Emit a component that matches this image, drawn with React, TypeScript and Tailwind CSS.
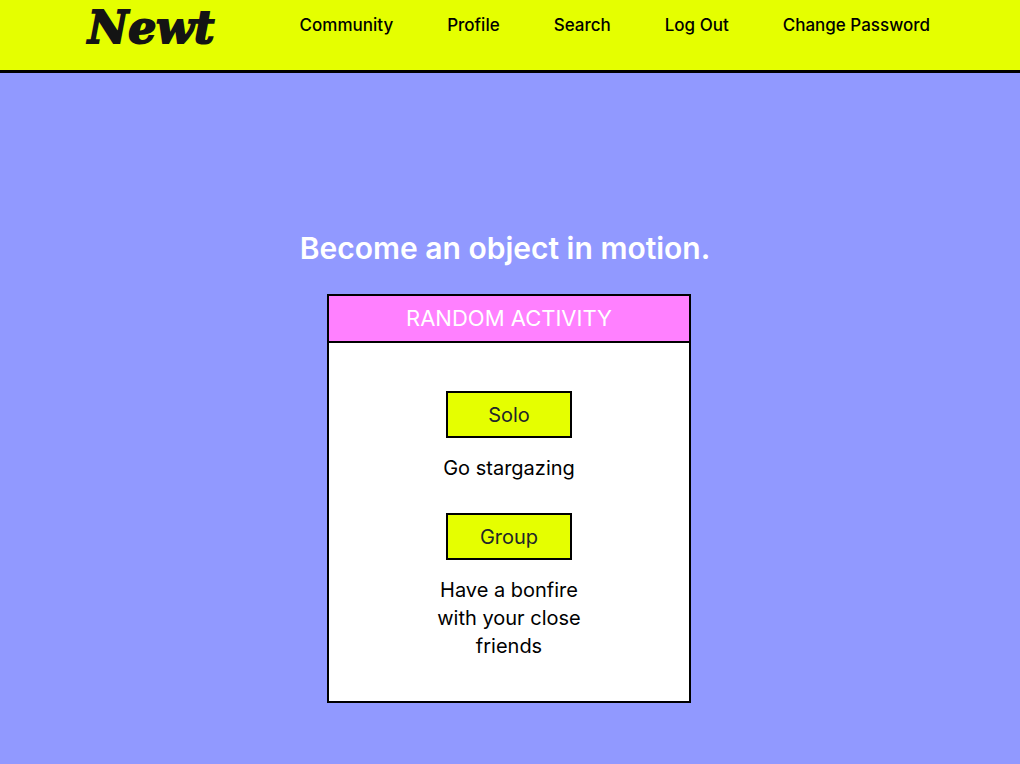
import type { ReactNode } from "react";

const links = ["Community", "Profile", "Search", "Log Out", "Change Password"];

function Header() {
  return (
    <header className="flex h-[73px] items-start justify-between border-b-3 border-black bg-[#e5ff00] pr-[90px] pl-[88px]">
      <a
        href="#home"
        className="pt-0.5 font-['DejaVu_Serif',serif] text-[44px] leading-[52px] font-bold text-[#141414] italic [-webkit-text-stroke:2px_#141414]"
      >
        Newt
      </a>
      <nav className="flex gap-[54px] pt-[13px] text-[17px] leading-6 font-medium whitespace-nowrap">
        {links.map((label) => (
          <a key={label} href={"#" + label.toLowerCase().replace(" ", "-")}>
            {label}
          </a>
        ))}
      </nav>
    </header>
  );
}

function Activity({ label, children }: { label: string; children: ReactNode }) {
  return (
    <div className="flex w-[156px] flex-col items-center gap-4">
      <button
        type="button"
        className="h-[47px] w-[126px] border-2 border-black bg-[#e5ff00] text-[20px] leading-7 text-[#212529]"
      >
        {label}
      </button>
      <p className="text-center text-[20px] leading-7">{children}</p>
    </div>
  );
}

export default function App() {
  return (
    <div className="min-h-screen bg-[#9199ff] font-['Inter',sans-serif] text-black">
      <Header />
      <main className="flex flex-col items-center pt-[155px] pr-[18px] pb-15 pl-4">
        <h1 className="pr-2 text-center text-[30px] leading-10 font-semibold text-white">
          Become an object in motion.
        </h1>
        <section className="mt-[26px] w-full max-w-[364px] border-2 border-black bg-white">
          <h2 className="border-b-2 border-black bg-[#ff80ff] text-center text-[22px] leading-[45px] text-white">
            RANDOM ACTIVITY
          </h2>
          <div className="flex flex-col items-center gap-[31px] pt-12 pb-[41px]">
            <Activity label="Solo">Go stargazing</Activity>
            <Activity label="Group">Have a bonfire with your close friends</Activity>
          </div>
        </section>
      </main>
    </div>
  );
}
